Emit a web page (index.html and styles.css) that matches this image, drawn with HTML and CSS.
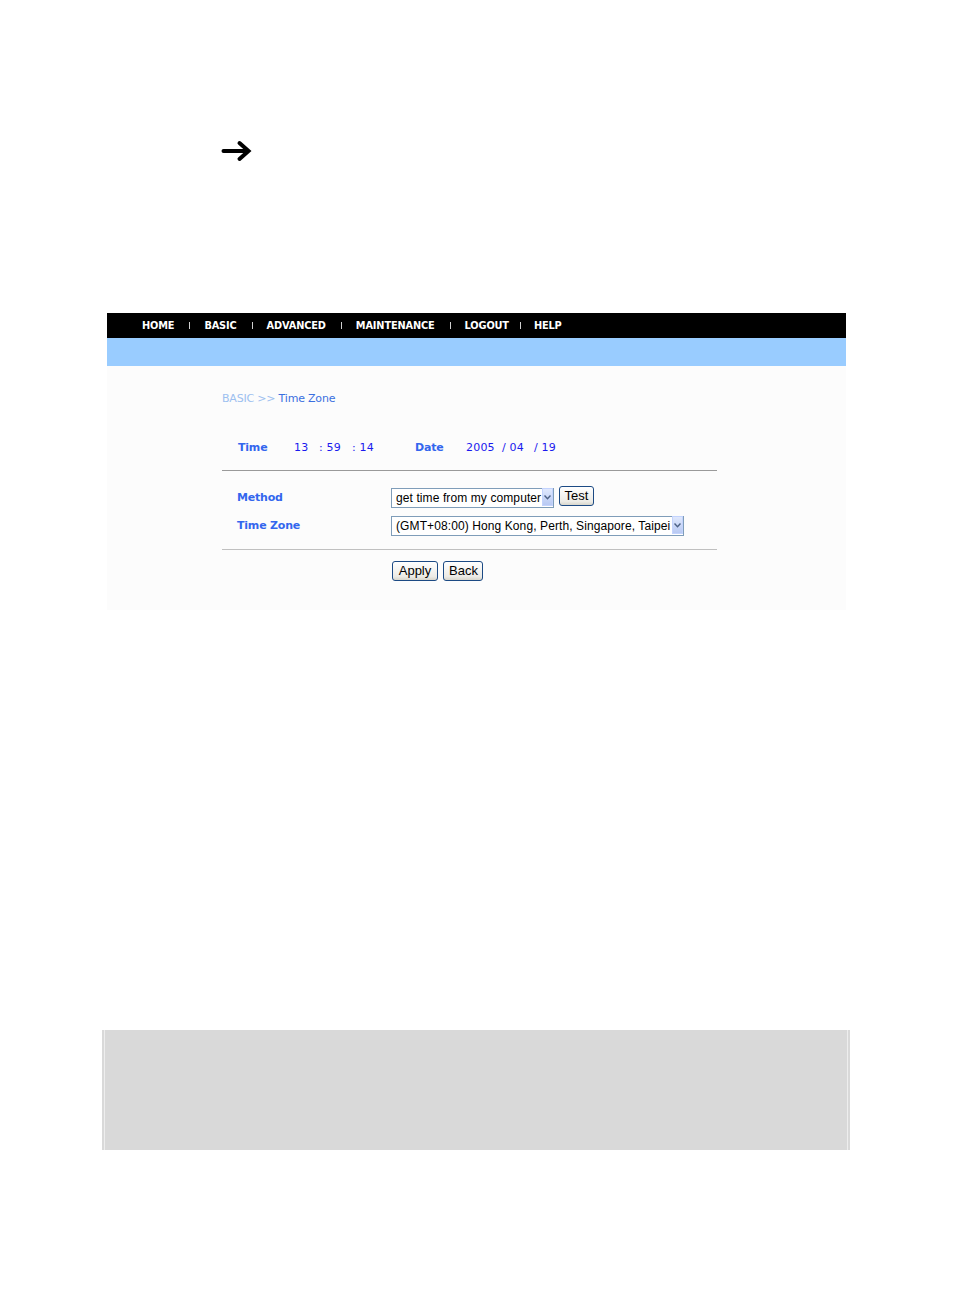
FILE: index.html
```html
<!DOCTYPE html>
<html lang="en">
<head>
    <meta charset="UTF-8">
    <title>Time Zone</title>
    <link rel="stylesheet" href="styles.css">
</head>
<body>
    <div class="arrow-line">
        <svg width="32" height="22" viewBox="0 0 32 22">
            <path d="M2.5 11 H27 M18.5 3 L27.5 11 L18.5 19" fill="none" stroke="#000" stroke-width="4" stroke-linecap="round" stroke-linejoin="miter"/>
        </svg>
    </div>

    <div class="panel">
        <!-- top menu -->
        <div class="nav">
            <a>HOME</a><span class="sep"></span>
            <a>BASIC</a><span class="sep"></span>
            <a>ADVANCED</a><span class="sep"></span>
            <a>MAINTENANCE</a><span class="sep"></span>
            <a>LOGOUT</a><span class="sep sep-last"></span>
            <a>HELP</a>
        </div>
        <div class="subbar"></div>

        <div class="content">
            <div class="crumb"><span class="crumb-root">BASIC &gt;&gt;</span> Time Zone</div>

            <div class="clock">
                <span class="lbl w-time">Time</span>
                <span class="val w-hh">13</span>
                <span class="val w-mm">: 59</span>
                <span class="val w-ss">: 14</span>
                <span class="lbl w-date">Date</span>
                <span class="val w-yy">2005</span>
                <span class="val w-mo">/ 04</span>
                <span class="val">/ 19</span>
            </div>

            <div class="rule"></div>

            <div class="form">
                <div class="row">
                    <span class="lbl field">Method</span>
                    <span class="sel sel-method">
                        <select><option>get time from my computer</option></select>
                        <span class="drop"><svg width="7" height="5" viewBox="0 0 7 5"><path d="M0.5 0.5 L3.5 3.8 L6.5 0.5" fill="none" stroke="#4d6185" stroke-width="1.4"/></svg></span>
                    </span>
                    <button class="btn btn-test">Test</button>
                </div>
                <div class="row">
                    <span class="lbl field">Time Zone</span>
                    <span class="sel sel-zone">
                        <select><option>(GMT+08:00) Hong Kong, Perth, Singapore, Taipei</option></select>
                        <span class="drop"><svg width="7" height="5" viewBox="0 0 7 5"><path d="M0.5 0.5 L3.5 3.8 L6.5 0.5" fill="none" stroke="#4d6185" stroke-width="1.4"/></svg></span>
                    </span>
                </div>
            </div>

            <div class="rule rule-light"></div>

            <div class="actions">
                <button class="btn btn-apply">Apply</button>
                <button class="btn btn-back">Back</button>
            </div>
        </div>
    </div>

    <div class="note-box"></div>
</body>
</html>
```

FILE: styles.css
```css
body {
    margin: 0;
    background: #fff;
    font-family: "DejaVu Sans", Verdana, sans-serif;
}
.arrow-line {
    padding: 140px 0 0 221px;
    height: 22px;
}
.arrow-line svg {
    display: block;
}
.panel {
    width: 739px;
    margin: 151px 0 0 107px;
    background: #fcfcfc;
}
.nav {
    height: 25px;
    background: #000;
    display: flex;
    align-items: center;
    padding-left: 35px;
    font-size: 9.8px;
    font-weight: bold;
    color: #fff;
    letter-spacing: -0.15px;
}
.nav a {
    color: #fff;
}
.nav .sep {
    width: 1px;
    height: 7px;
    background: #cfcfcf;
    margin: 0 14px 0 15px;
}
.nav .sep-last {
    margin: 0 13px 0 11px;
}
.subbar {
    height: 28px;
    background: #99ccff;
}
.content {
    height: 244px;
    padding-left: 115px;
}
.crumb {
    padding-top: 26px;
    font-size: 11px;
    color: #3a6fe0;
    letter-spacing: -0.2px;
}
.crumb-root {
    color: #9cc0f0;
}
.clock {
    display: flex;
    margin-top: 36px;
    padding-left: 16px;
    font-size: 11px;
    height: 14px;
}
.lbl {
    color: #3366ee;
    font-weight: bold;
    letter-spacing: -0.2px;
}
.val {
    color: #1a1aee;
    letter-spacing: 0.2px;
}
.w-time { width: 56px; }
.w-hh { width: 25px; }
.w-mm { width: 33px; }
.w-ss { width: 63px; }
.w-date { width: 51px; }
.w-yy { width: 36px; }
.w-mo { width: 32px; }
.rule {
    width: 495px;
    height: 1px;
    background: #9a9a9a;
    margin-top: 15px;
}
.rule-light {
    background: #c0c0c0;
    margin-top: 10px;
}
.form {
    padding-top: 16px;
}
.row {
    display: flex;
    align-items: center;
    height: 28px;
    margin-top: -4px;
}
.row + .row {
    margin-top: 0;
}
.field {
    width: 154px;
    padding-left: 15px;
    font-size: 11px;
}
.sel {
    position: relative;
    display: inline-block;
    height: 20px;
}
.sel select {
    -webkit-appearance: none;
    appearance: none;
    height: 20px;
    box-sizing: border-box;
    border: 1px solid #7f9db9;
    border-radius: 0;
    background: #fff;
    font-family: "Liberation Sans", Arial, sans-serif;
    font-size: 12px;
    letter-spacing: 0.1px;
    color: #000;
    padding: 0 0 0 4px;
    margin: 0;
    outline: none;
}
.sel-method select { width: 163px; }
.sel-zone select { width: 293px; }
.drop {
    position: absolute;
    right: 1px;
    top: 1px;
    height: 16px;
    width: 9px;
    border: 1px solid #c3d3fd;
    background: linear-gradient(#dfe8fd, #b8c9f3);
    display: flex;
    align-items: center;
    justify-content: center;
}
.btn {
    font-family: "Liberation Sans", Arial, sans-serif;
    font-size: 13px;
    color: #000;
    height: 20px;
    padding: 0 5px;
    border: 1px solid #1c4a84;
    border-radius: 3px;
    background: linear-gradient(#ffffff, #ecebe6 80%, #d8d6cc);
    line-height: 16px;
}
.btn-test {
    margin: -2px 0 0 5px;
    width: 35px;
    padding: 0;
}
.btn-apply { width: 46px; }
.btn-back { width: 40px; }
.actions {
    padding: 11px 0 0 170px;
    display: flex;
    gap: 5px;
}
.note-box {
    width: 744px;
    height: 120px;
    margin: 420px 0 0 102px;
    background: #d9d9d9;
    border-left: 2px solid #d9d9d9;
    border-right: 2px solid #d9d9d9;
    box-shadow: inset 1px 0 0 #eeeeee, inset -1px 0 0 #eeeeee;
}
```
